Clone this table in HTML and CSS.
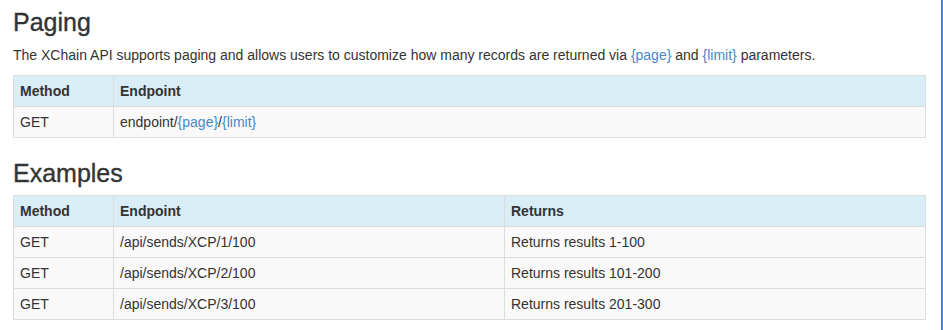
FILE: index.html
```html
<!DOCTYPE html>
<html lang="en">
<head>
<meta charset="utf-8">
<title>Paging</title>
<link rel="stylesheet" href="styles.css">
</head>
<body>
<div class="frame">
  <main class="content">
    <h3 class="title">Paging</h3>
    <p class="intro">The XChain API supports paging and allows users to customize how many records are returned via <a class="param" href="#">{page}</a> and <a class="param" href="#">{limit}</a> parameters.</p>
    <table class="grid">
      <colgroup><col class="col-method"><col></colgroup>
      <thead>
        <tr><th>Method</th><th>Endpoint</th></tr>
      </thead>
      <tbody>
        <tr><td>GET</td><td>endpoint/<a class="param" href="#">{page}</a>/<a class="param" href="#">{limit}</a></td></tr>
      </tbody>
    </table>
    <h3 class="title">Examples</h3>
    <table class="grid">
      <colgroup><col class="col-method"><col class="col-endpoint"><col></colgroup>
      <thead>
        <tr><th>Method</th><th>Endpoint</th><th>Returns</th></tr>
      </thead>
      <tbody>
        <tr><td>GET</td><td>/api/sends/XCP/1/100</td><td>Returns results 1-100</td></tr>
        <tr><td>GET</td><td>/api/sends/XCP/2/100</td><td>Returns results 101-200</td></tr>
        <tr><td>GET</td><td>/api/sends/XCP/3/100</td><td>Returns results 201-300</td></tr>
      </tbody>
    </table>
  </main>
  <div class="edge"></div>
</div>
</body>
</html>
```
FILE: styles.css
```css
html, body {
  margin: 0;
  padding: 0;
  background: #fff;
}
body {
  font-family: "Liberation Sans", Helvetica, Arial, sans-serif;
  font-size: 14px;
  line-height: 20px;
  color: #333;
}
.frame {
  display: flex;
  min-height: 100vh;
}
.content {
  flex: 1;
  padding: 9px 15px 0 13px;
}
.edge {
  width: 2px;
  background: #4a84c9;
}
.title {
  font-size: 25px;
  font-weight: 500;
  line-height: 1.1;
  margin: 22px 0 8px;
  color: #333;
  -webkit-text-stroke: 0.35px #333;
}
.title:first-child {
  margin-top: 0;
}
.intro {
  margin: 0 0 10px;
}
.param {
  color: #428bca;
  text-decoration: none;
}
.grid {
  width: 100%;
  border-collapse: collapse;
  table-layout: fixed;
  margin-bottom: 20px;
}
.col-method {
  width: 100px;
}
.col-endpoint {
  width: 391px;
}
.grid th,
.grid td {
  border: 1px solid #ddd;
  padding: 5px 6px;
  line-height: 20px;
  text-align: left;
  vertical-align: top;
}
.grid th {
  background: #d9edf7;
  font-weight: bold;
}
.grid td {
  background: #f9f9f9;
}
```
